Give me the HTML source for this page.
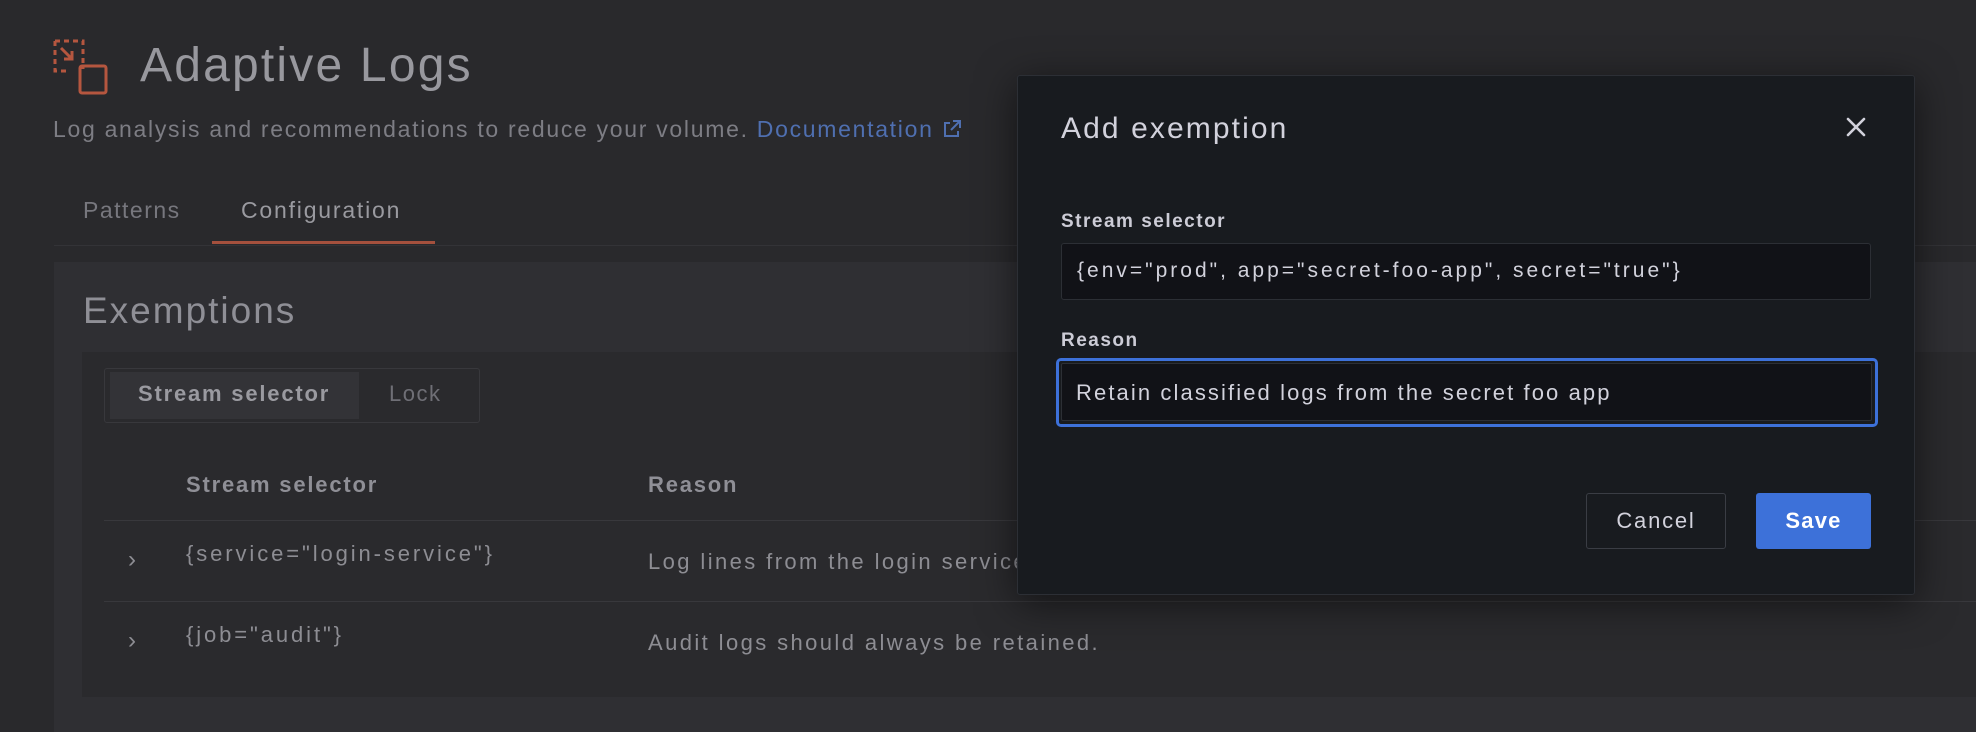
<!DOCTYPE html>
<html><head><meta charset="utf-8"><style>
*{box-sizing:border-box;margin:0;padding:0}
body{width:1976px;height:732px;overflow:hidden;background:#29292c;font-family:"Liberation Sans",sans-serif;position:relative;color:#8d8d93}
.a{position:absolute;white-space:nowrap}
</style></head><body>
<svg class="a" style="left:52px;top:39px" width="60" height="56" viewBox="0 0 60 56" fill="none" stroke="#b5563f" stroke-width="3">
<path d="M3 2h28v28" stroke-dasharray="5 4"/><path d="M3 2v30h12" stroke-dasharray="5 4"/>
<path d="M9 9l11 11M20 12v8h-8"/>
<rect x="28" y="27" width="26" height="27" rx="2"/>
</svg>
<div class="a" style="left:140px;top:38px;font-size:48px;letter-spacing:2.2px;color:#98989e">Adaptive Logs</div>
<div class="a" style="left:53px;top:116px;font-size:23px;letter-spacing:1.7px;color:#7d7d84">Log analysis and recommendations to reduce your volume. <span style="color:#4f6fb0">Documentation</span> <svg width="20" height="20" viewBox="0 0 20 20" fill="none" stroke="#4f6fb0" stroke-width="2" style="vertical-align:-2px"><path d="M8 4H3v13h13v-5M11 2h7v7M18 2l-9 9"/></svg></div>
<div class="a" style="left:83px;top:197px;font-size:23px;letter-spacing:1.5px;color:#77777e">Patterns</div>
<div class="a" style="left:241px;top:197px;font-size:23px;letter-spacing:1.8px;color:#9a9aa0">Configuration</div>
<div class="a" style="left:54px;top:245px;width:1922px;height:1px;background:#333337"></div>
<div class="a" style="left:212px;top:241px;width:223px;height:3px;background:#a4503d"></div>
<div class="a" style="left:54px;top:262px;width:1922px;height:470px;background:#2f2f33"></div>
<div class="a" style="left:83px;top:290px;font-size:37px;letter-spacing:2px;color:#8f8f96">Exemptions</div>
<div class="a" style="left:82px;top:352px;width:1894px;height:345px;background:#2a2a2d"></div>
<div class="a" style="left:104px;top:368px;width:376px;height:55px;border:1px solid #38383c;border-radius:3px"></div>
<div class="a" style="left:110px;top:372px;width:249px;height:47px;background:#333337"></div>
<div class="a" style="left:138px;top:381px;font-size:22px;letter-spacing:1.8px;color:#9a9aa0;font-weight:bold">Stream selector</div>
<div class="a" style="left:389px;top:381px;font-size:22px;letter-spacing:1.5px;color:#6f6f76">Lock</div>
<div class="a" style="left:186px;top:472px;font-size:22px;letter-spacing:1.8px;color:#8f8f96;font-weight:bold">Stream selector</div>
<div class="a" style="left:648px;top:472px;font-size:22px;letter-spacing:1.8px;color:#8f8f96;font-weight:bold">Reason</div>
<div class="a" style="left:104px;top:520px;width:1872px;height:1px;background:#38383c"></div>
<div class="a" style="left:104px;top:601px;width:1872px;height:1px;background:#38383c"></div>
<div class="a" style="left:128px;top:546px;font-size:24px;color:#8d8d93">›</div>
<div class="a" style="left:186px;top:541px;font-size:22px;letter-spacing:2.9px">{service="login-service"}</div>
<div class="a" style="left:648px;top:549px;font-size:22px;letter-spacing:2.4px">Log lines from the login service</div>
<div class="a" style="left:128px;top:627px;font-size:24px;color:#8d8d93">›</div>
<div class="a" style="left:186px;top:622px;font-size:22px;letter-spacing:2.9px">{job="audit"}</div>
<div class="a" style="left:648px;top:630px;font-size:22px;letter-spacing:2.4px">Audit logs should always be retained.</div>

<div class="a" style="left:1017px;top:75px;width:898px;height:520px;background:#181b1f;border:1px solid #2c2f35;border-radius:3px;box-shadow:0 8px 40px rgba(0,0,0,.55)"></div>
<div class="a" style="left:1061px;top:112px;font-size:30px;letter-spacing:2.1px;color:#d2d2dc">Add exemption</div>
<svg class="a" style="left:1845px;top:116px" width="22" height="22" viewBox="0 0 22 22" stroke="#d2d2dc" stroke-width="2.6" stroke-linecap="round"><path d="M3 3l16 16M19 3L3 19"/></svg>
<div class="a" style="left:1061px;top:211px;font-size:19px;letter-spacing:1.5px;font-weight:bold;color:#ccccd6">Stream selector</div>
<div class="a" style="left:1061px;top:243px;width:810px;height:57px;background:#111217;border:1px solid #2c2f35;border-radius:3px"></div>
<div class="a" style="left:1077px;top:259px;font-size:21px;letter-spacing:3px;color:#d2d2dc">{env="prod", app="secret-foo-app", secret="true"}</div>
<div class="a" style="left:1061px;top:330px;font-size:19px;letter-spacing:1.5px;font-weight:bold;color:#ccccd6">Reason</div>
<div class="a" style="left:1056px;top:358px;width:822px;height:69px;border:3px solid #3d71d9;border-radius:5px"></div>
<div class="a" style="left:1061px;top:363px;width:811px;height:58px;background:#111217;border:1px solid #2c2f35;border-radius:2px"></div>
<div class="a" style="left:1076px;top:380px;font-size:22px;letter-spacing:2.1px;color:#d2d2dc">Retain classified logs from the secret foo app</div>
<div class="a" style="left:1586px;top:493px;width:140px;height:56px;border:1px solid #3a3d44;border-radius:3px;font-size:22px;letter-spacing:1.8px;color:#d2d2dc;text-align:center;line-height:54px">Cancel</div>
<div class="a" style="left:1756px;top:493px;width:115px;height:56px;background:#3d71d9;border-radius:3px;font-size:22px;letter-spacing:1.2px;font-weight:bold;color:#fff;text-align:center;line-height:56px">Save</div>
</body></html>
